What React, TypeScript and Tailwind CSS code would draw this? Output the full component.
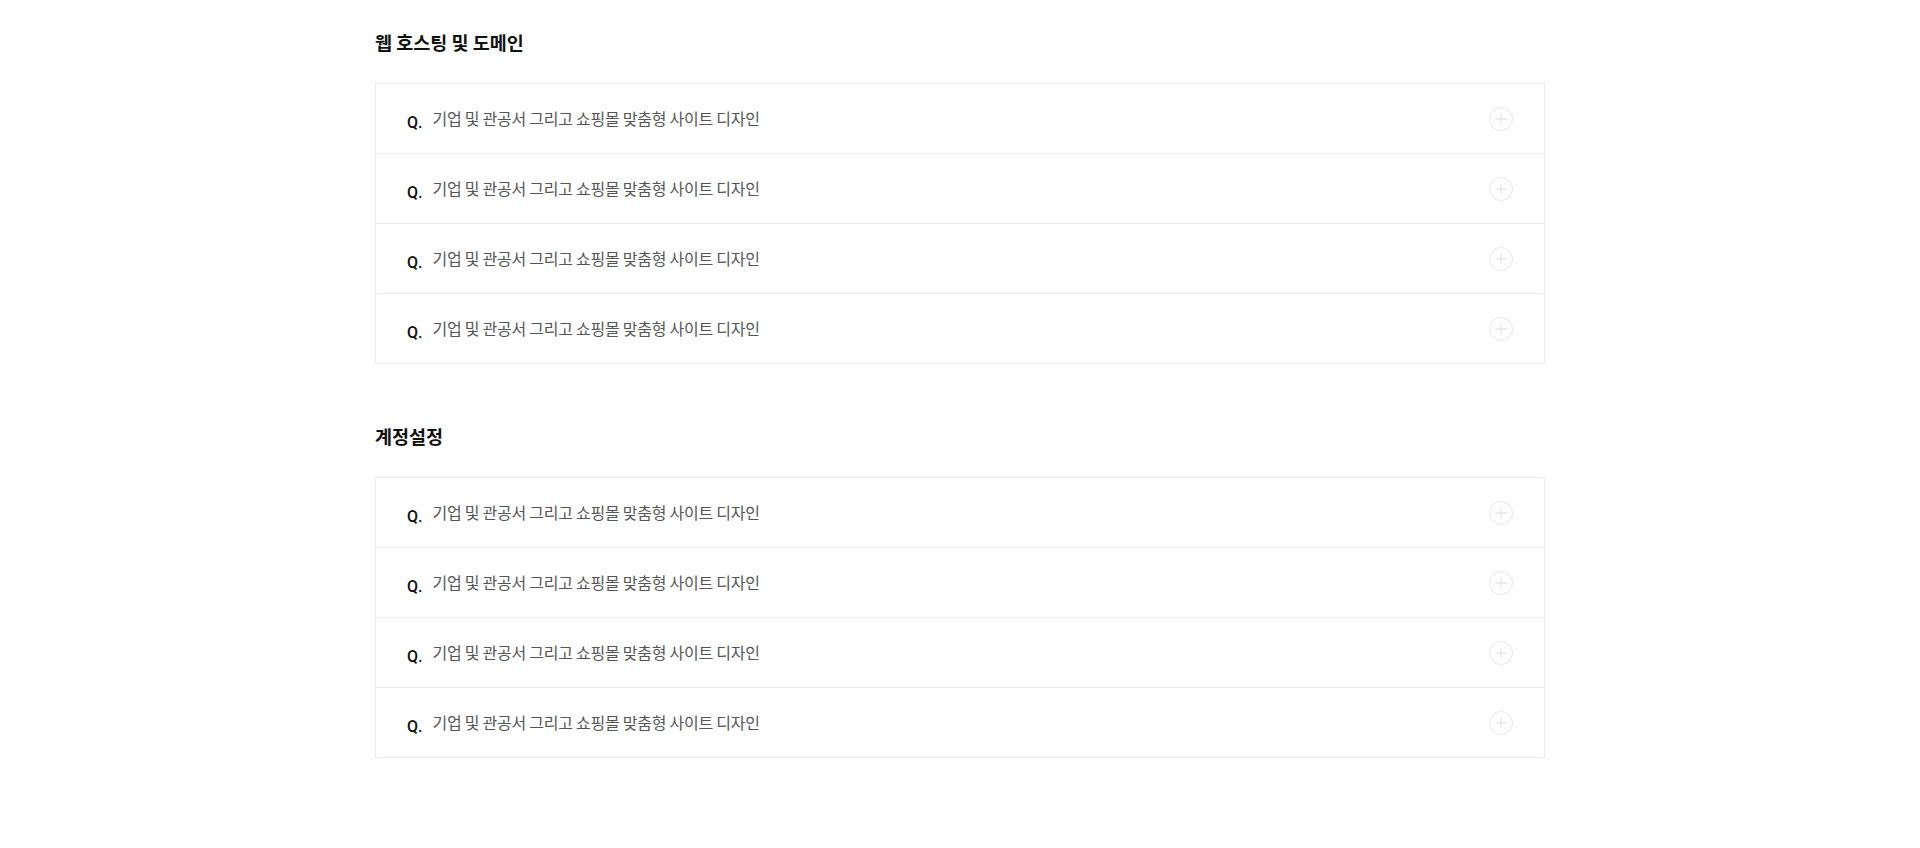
const sections = [
  {
    title: "웹 호스팅 및 도메인",
    items: [
      "기업 및 관공서 그리고 쇼핑몰 맞춤형 사이트 디자인",
      "기업 및 관공서 그리고 쇼핑몰 맞춤형 사이트 디자인",
      "기업 및 관공서 그리고 쇼핑몰 맞춤형 사이트 디자인",
      "기업 및 관공서 그리고 쇼핑몰 맞춤형 사이트 디자인",
    ],
  },
  {
    title: "계정설정",
    items: [
      "기업 및 관공서 그리고 쇼핑몰 맞춤형 사이트 디자인",
      "기업 및 관공서 그리고 쇼핑몰 맞춤형 사이트 디자인",
      "기업 및 관공서 그리고 쇼핑몰 맞춤형 사이트 디자인",
      "기업 및 관공서 그리고 쇼핑몰 맞춤형 사이트 디자인",
    ],
  },
];

function PlusCircle() {
  return (
    <svg width="24" height="24" viewBox="0 0 24 24" fill="none" aria-hidden="true">
      <circle cx="12" cy="12" r="11.5" stroke="#e6e4f2" strokeWidth="1" />
      <path d="M12 6.5v11M6.5 12h11" stroke="#dedcec" strokeWidth="1" />
    </svg>
  );
}

function FaqRow({ text, first }: { text: string; first: boolean }) {
  return (
    <button
      className={`flex items-center w-full pl-[31px] pr-[31px] text-left ${
        first ? "h-[69px]" : "h-[70px] border-t border-[#ebe9f4]"
      }`}
    >
      <span
        className="text-[16px] font-medium text-[#111] mt-[8px] mr-[10px]"
        style={{ fontFamily: "Roboto, Arial, sans-serif" }}
      >
        Q.
      </span>
      <span className="flex-1 text-[16px] tracking-[-0.25px] text-[#555] leading-[20px] mb-[2px]">{text}</span>
      <PlusCircle />
    </button>
  );
}

export default function App() {
  return (
    <div
      className="min-h-screen bg-white pt-[29px] pb-[90px]"
      style={{ fontFamily: '"Noto Sans CJK KR", "Noto Sans", sans-serif' }}
    >
      <div className="w-[1170px] mx-auto">
        {sections.map((section, si) => (
          <section key={si} className={si > 0 ? "mt-[59px]" : ""}>
            <h2 className="h-[26px] leading-[26px] text-[18.5px] font-bold text-[#111] mb-[28px]">
              {section.title}
            </h2>
            <div className="border border-[#ebe9f4]">
              {section.items.map((item, i) => (
                <FaqRow key={i} text={item} first={i === 0} />
              ))}
            </div>
          </section>
        ))}
      </div>
    </div>
  );
}
